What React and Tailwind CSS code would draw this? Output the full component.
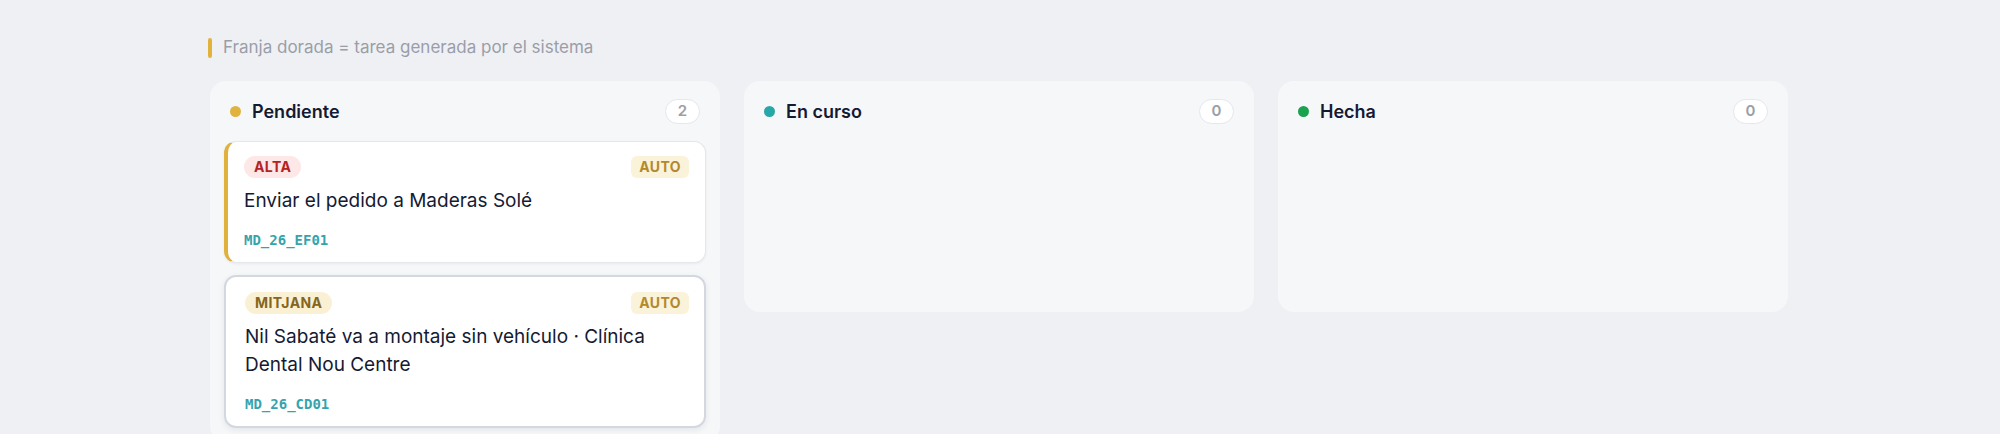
import React from 'react';

const columns = [
  { id: 'pendiente', title: 'Pendiente', dot: 'bg-[#e2b33c]' },
  { id: 'curso', title: 'En curso', dot: 'bg-[#27a8a8]' },
  { id: 'hecha', title: 'Hecha', dot: 'bg-[#1aa34f]' },
];

const tasks = [
  {
    id: 'MD_26_EF01',
    column: 'pendiente',
    priority: 'ALTA',
    title: 'Enviar el pedido a Maderas Solé',
    auto: true,
    active: false,
  },
  {
    id: 'MD_26_CD01',
    column: 'pendiente',
    priority: 'MITJANA',
    title: 'Nil Sabaté va a montaje sin vehículo · Clínica Dental Nou Centre',
    auto: true,
    active: true,
  },
];

const priorityStyles = {
  ALTA: 'bg-[#fde7e7] text-[#b42323]',
  MITJANA: 'bg-[#faf0d4] text-[#85661c]',
};

function TaskCard({ task }) {
  const cardClass = task.active
    ? 'border-2 border-[#d3d8e0] shadow-[0_2px_6px_rgba(15,23,42,0.08)] pl-[19px] pr-[15px] pt-[15px] pb-[12px]'
    : 'border border-[#e4e7ec] border-l-[4px] border-l-[#e0b23d] shadow-[0_1px_3px_rgba(15,23,42,0.06)] pl-[16px] pr-[16px] pt-[14px] pb-[12px]';

  return (
    <div className={`bg-white rounded-xl ${cardClass}`}>
      <div className="flex items-center justify-between h-[22px]">
        <span className={`h-[22px] px-[10px] rounded-full text-[14px] font-bold tracking-[0.03em] leading-[22px] ${priorityStyles[task.priority]}`}>
          {task.priority}
        </span>
        {task.auto && (
          <span className="h-[22px] px-[8px] rounded-md bg-[#fbf2da] text-[#b3892c] text-[14px] font-bold tracking-[0.03em] leading-[22px]">
            AUTO
          </span>
        )}
      </div>
      <p className="mt-[9px] text-[19px] leading-[28px] text-[#151a33]">{task.title}</p>
      <div className="mt-[15px] font-['DejaVu_Sans_Mono',monospace] text-[14px] leading-[20px] font-semibold text-[#35a3ad]">
        {task.id}
      </div>
    </div>
  );
}

export default function App() {
  return (
    <div className="w-[2000px] h-[434px] overflow-hidden bg-[#eff0f4] font-['Inter',sans-serif]">
      <div className="ml-[208px] pt-[38px]">
        <div className="flex items-center gap-[11px] h-[20px]">
          <span className="w-[4px] h-[20px] rounded-full bg-[#e2b33c]"></span>
          <span className="text-[17px] text-[#9a9ea8]">Franja dorada = tarea generada por el sistema</span>
        </div>
      </div>

      <div className="ml-[210px] mt-[23px] w-[1578px] grid grid-cols-3 gap-6 items-start">
        {columns.map((col) => {
          const colTasks = tasks.filter((t) => t.column === col.id);
          return (
            <div key={col.id} className="bg-[#f6f7f9] rounded-2xl px-[14px] pt-[18px] pb-[14px] min-h-[231px]">
              <div className="flex items-center justify-between pl-[6px] pr-[6px] h-[25px]">
                <div className="flex items-center gap-[11px]">
                  <span className={`w-[11px] h-[11px] rounded-full ${col.dot}`}></span>
                  <h3 className="text-[18px] font-semibold text-[#151a33]">{col.title}</h3>
                </div>
                <span className="h-[25px] min-w-[35px] px-[10px] rounded-full bg-white border border-[#e4e7ec] text-[15px] font-semibold text-[#9a9ea8] flex items-center justify-center">
                  {colTasks.length}
                </span>
              </div>
              <div className="mt-[17px] flex flex-col gap-3">
                {colTasks.map((task) => (
                  <TaskCard key={task.id} task={task} />
                ))}
              </div>
            </div>
          );
        })}
      </div>
    </div>
  );
}
